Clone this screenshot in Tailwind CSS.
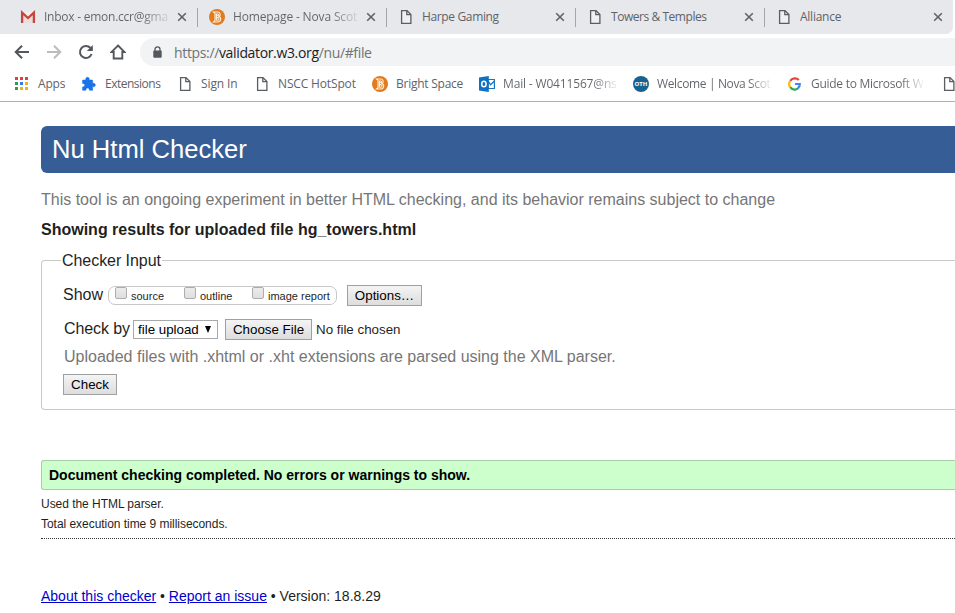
<!DOCTYPE html>
<html lang="en">
<head>
<meta charset="utf-8">
<title>Nu Html Checker</title>
<script src="https://cdn.jsdelivr.net/npm/@tailwindcss/browser@4"></script>
</head>
<body class="w-[955px] h-[613px] overflow-hidden bg-white font-['Liberation_Sans',Arial,sans-serif] text-[#1f1f1f]">
<svg class="hidden">
  <symbol id="doc" viewBox="0 0 16 16"><path d="M3.6 1.6H9L12.9 5.5V14.4H3.6ZM8.8 1.8V5.7H12.7" fill="#fff" fill-opacity=".35" stroke="#5a5d61" stroke-width="1.3"/></symbol>
  <symbol id="close" viewBox="0 0 10 10"><path d="M1.2 1.2L8.8 8.8M8.8 1.2L1.2 8.8" stroke="#5f6368" stroke-width="1.6"/></symbol>
  <symbol id="bs" viewBox="0 0 16 16"><circle cx="8" cy="8" r="8" fill="#e07b20"/><path d="M4.4 3H8.8C11.4 3 12 6.3 10 7.5C12.8 8.6 12 13 8.8 13H4.4L6 11.6V4.4ZM7.4 4.6V11.4M7.4 5H8.8C10 5.2 9.8 6.8 8.6 6.8H7.6M7.6 8.6H9C10.4 8.9 10.2 11.2 8.7 11.2H7.6" fill="none" stroke="#fff3df" stroke-width="1.05"/></symbol>
</svg>
<header class="h-[102px] border-b border-[#b1b1b3] font-['Open_Sans','Noto_Sans',sans-serif] text-[12px] text-[#5f6368]">
  <div class="h-[34px] bg-white">
    <div class="flex h-[34px] w-[953px] rounded-br-[7px] bg-[#e6e8eb] pl-[8px]">
      <div class="relative flex w-[190px] items-center pl-[12px] pr-[11px] after:absolute after:right-0 after:top-[8px] after:h-[19px] after:w-px after:bg-[#a2a5a9]">
        <svg class="size-4 shrink-0" viewBox="0 0 16 16"><path d="M1 3H15V14H1Z" fill="#f4efee"/><path d="M3 5L8 9.6L13 5V14H3Z" fill="#e6dfde"/><path d="M2.1 14V3.6L8 9L13.9 3.6V14" fill="none" stroke="#c8453c" stroke-width="2.3"/></svg>
        <span class="ml-2 whitespace-nowrap tracking-[-0.24px] bg-linear-to-r from-[#5f6368] from-78% to-[#5f6368]/15 bg-clip-text text-transparent">Inbox - emon.ccr@gma</span>
        <svg class="ml-auto size-[10px] shrink-0"><use href="#close"/></svg>
      </div>
      <div class="relative flex w-[189px] items-center pl-[11px] pr-[11px] after:absolute after:right-0 after:top-[8px] after:h-[19px] after:w-px after:bg-[#a2a5a9]">
        <svg class="size-4 shrink-0"><use href="#bs"/></svg>
        <span class="ml-2 whitespace-nowrap tracking-[-0.15px] bg-linear-to-r from-[#5f6368] from-78% to-[#5f6368]/15 bg-clip-text text-transparent">Homepage - Nova Scot</span>
        <svg class="ml-auto size-[10px] shrink-0"><use href="#close"/></svg>
      </div>
      <div class="relative flex w-[189px] items-center pl-[11px] pr-[11px] after:absolute after:right-0 after:top-[8px] after:h-[19px] after:w-px after:bg-[#a2a5a9]">
        <svg class="size-4 shrink-0"><use href="#doc"/></svg>
        <span class="ml-2 whitespace-nowrap tracking-[-0.36px]">Harpe Gaming</span>
        <svg class="ml-auto size-[10px]"><use href="#close"/></svg>
      </div>
      <div class="relative flex w-[189px] items-center pl-[11px] pr-[11px] after:absolute after:right-0 after:top-[8px] after:h-[19px] after:w-px after:bg-[#a2a5a9]">
        <svg class="size-4 shrink-0"><use href="#doc"/></svg>
        <span class="ml-2 whitespace-nowrap tracking-[-0.45px]">Towers &amp; Temples</span>
        <svg class="ml-auto size-[10px]"><use href="#close"/></svg>
      </div>
      <div class="flex w-[188px] items-center pl-[11px] pr-[10px]">
        <svg class="size-4 shrink-0"><use href="#doc"/></svg>
        <span class="ml-2 whitespace-nowrap tracking-[-0.25px]">Alliance</span>
        <svg class="ml-auto size-[10px]"><use href="#close"/></svg>
      </div>
    </div>
  </div>
  <div class="flex h-[36px] items-center pl-[14px]">
    <svg class="size-4" viewBox="0 0 16 16"><path d="M15 8H2M8 1.7L1.7 8L8 14.3" fill="none" stroke="#54575b" stroke-width="2"/></svg>
    <svg class="ml-4 size-4" viewBox="0 0 16 16"><path d="M1 8H14M8 1.7L14.3 8L8 14.3" fill="none" stroke="#babcbe" stroke-width="2"/></svg>
    <svg class="ml-4 size-4" viewBox="0 0 16 16"><path d="M13.6 10A6 6 0 1 1 12.3 3.8L14 5.5" fill="none" stroke="#54575b" stroke-width="2"/><path d="M14.8 1V7H8.8Z" fill="#54575b"/></svg>
    <svg class="ml-4 size-4" viewBox="0 0 16 16"><path d="M8 1.5L14.5 8H12.3V14.5H3.7V8H1.5Z" fill="none" stroke="#54575b" stroke-width="1.9"/></svg>
    <div class="ml-[14px] flex h-[28px] flex-1 items-center rounded-l-full bg-[#f1f3f4] pl-[13px]">
      <svg class="h-[12px] w-[9px]" viewBox="0 0 9 12"><path d="M2 5V3.2a2.5 2.3 0 0 1 5 0V5" fill="none" stroke="#54575b" stroke-width="1.3"/><rect x=".3" y="4.4" width="8.4" height="7.4" rx="1" fill="#54575b"/></svg>
      <span class="ml-[12px] text-[14px] tracking-[-0.35px] text-[#6f7377]">https://<span class="text-[#202124]">validator.w3.org</span>/nu/#file</span>
    </div>
  </div>
  <div class="flex h-[28px] items-center whitespace-nowrap pl-[14px]">
    <div class="flex w-[67px] shrink-0 items-center">
      <svg class="size-4" viewBox="0 0 16 16"><path d="M1 1h3v3H1zM6 1h3v3H6zM11 1h3v3h-3z" fill="#d8453a"/><path d="M1 6h3v3H1zM1 11h3v3H1z" fill="#2f9a50"/><path d="M6 6h3v3H6z" fill="#3b78e7"/><path d="M11 6h3v3h-3z" fill="#f0b21a"/><path d="M6 11h3v3H6zM11 11h3v3h-3z" fill="#f0b21a"/></svg>
      <span class="ml-2 tracking-[-0.2px]">Apps</span>
    </div>
    <div class="flex w-[96px] shrink-0 items-center">
      <svg class="size-4" viewBox="0 0 16 16"><path d="M1.6 4.1H4.9C4.4 2.2 5.3 1.3 6.5 1.3S8.6 2.2 8.1 4.1H11.6V7.3C13.4 6.9 14.3 7.8 14.3 9S13.4 11 11.6 10.6V14.2H8.4C8.4 12.6 7.6 12 6.6 12S4.9 12.6 4.9 14.2H1.6V11C3.2 10.8 3.8 10.1 3.8 9.1S3.2 7.5 1.6 7.4Z" fill="#1a73e8" stroke="#1a73e8" stroke-width=".6" stroke-linejoin="round"/></svg>
      <span class="ml-2 tracking-[-0.5px]">Extensions</span>
    </div>
    <div class="flex w-[77px] shrink-0 items-center"><svg class="size-4"><use href="#doc"/></svg><span class="ml-2 tracking-[-0.1px]">Sign In</span></div>
    <div class="flex w-[118px] shrink-0 items-center"><svg class="size-4"><use href="#doc"/></svg><span class="ml-2 tracking-[-0.15px]">NSCC HotSpot</span></div>
    <div class="flex w-[107px] shrink-0 items-center"><svg class="size-4"><use href="#bs"/></svg><span class="ml-2 tracking-[-0.25px]">Bright Space</span></div>
    <div class="flex w-[154px] shrink-0 items-center">
      <svg class="size-4" viewBox="0 0 16 16"><path d="M9 3.5H15.4V12.5H9Z" fill="#fff" stroke="#1976c5" stroke-width="1.2"/><path d="M9 5L11.6 8.7L15.4 5" fill="none" stroke="#1976c5" stroke-width="1.3"/><path d="M0 1.5L9.8 0V16L0 14.5Z" fill="#0f70c2"/><ellipse cx="4.9" cy="8" rx="2.2" ry="2.8" fill="none" stroke="#fff" stroke-width="1.5"/></svg>
      <span class="ml-2 tracking-[-0.16px] bg-linear-to-r from-[#5f6368] from-80% to-[#5f6368]/10 bg-clip-text text-transparent">Mail - W0411567@ns</span>
    </div>
    <div class="flex w-[154px] shrink-0 items-center">
      <div class="flex size-4 items-center justify-center rounded-full bg-[#17638f] text-[6px] font-bold text-white">OTH</div>
      <span class="ml-2 tracking-[-0.36px] bg-linear-to-r from-[#5f6368] from-80% to-[#5f6368]/10 bg-clip-text text-transparent">Welcome | Nova Scot</span>
    </div>
    <div class="flex w-[154px] shrink-0 items-center">
      <svg class="size-4" viewBox="0 0 16 16"><path d="M3.2 4.8A5.5 5.5 0 0 1 11.8 4" fill="none" stroke="#ea4335" stroke-width="2.2"/><path d="M3.2 4.8A5.5 5.5 0 0 0 3.2 11.2" fill="none" stroke="#fbbc05" stroke-width="2.2"/><path d="M3.2 11.2A5.2 5.2 0 0 0 11.3 12" fill="none" stroke="#34a853" stroke-width="2.2"/><path d="M8 8H12.8A5.2 5.2 0 0 1 11 12.2" fill="none" stroke="#4285f4" stroke-width="2.2"/></svg>
      <span class="ml-2 tracking-[-0.28px] bg-linear-to-r from-[#5f6368] from-80% to-[#5f6368]/10 bg-clip-text text-transparent">Guide to Microsoft W</span>
    </div>
    <svg class="size-4 shrink-0"><use href="#doc"/></svg>
  </div>
</header>
<main class="pl-[41px] pt-[24px]">
  <h1 class="h-[47px] rounded-l-[6px] bg-[#365d96] pl-[11px] text-[25.6px] leading-[46px] text-white">Nu Html Checker</h1>
  <p class="mt-[17px] text-[16px] leading-[20px] text-[#767676]">This tool is an ongoing experiment in better HTML checking, and its behavior remains subject to change</p>
  <h2 class="mt-[10px] text-[16px] font-bold leading-[20px]">Showing results for uploaded file hg_towers.html</h2>
  <fieldset class="mt-[11px] h-[159px] rounded-l-[4px] border border-r-0 border-[#c8c8c8] pl-[21px]">
    <legend class="-ml-[2px] px-px pt-px text-[16px] leading-[18px] tracking-[-0.05px]">Checker Input</legend>
    <div class="mt-[15px] flex h-[21px] items-center">
      <span class="w-[45px] pb-[2px] text-[16px] leading-[20px]">Show</span>
      <div class="flex h-[19px] w-[229px] items-center rounded-[7px] border border-[#c8c8c8] text-[11px]">
        <i class="mb-[5px] ml-[6px] size-[12px] rounded-[2px] border border-[#adadad] bg-linear-to-b from-[#ececec] to-[#dedede]"></i><span class="ml-[4px] w-[53px] pt-[2px]">source</span>
        <i class="mb-[5px] size-[12px] rounded-[2px] border border-[#adadad] bg-linear-to-b from-[#ececec] to-[#dedede]"></i><span class="ml-[4px] w-[52px] pt-[2px]">outline</span>
        <i class="mb-[5px] size-[12px] rounded-[2px] border border-[#adadad] bg-linear-to-b from-[#ececec] to-[#dedede]"></i><span class="ml-[4px] whitespace-nowrap pt-[2px]">image report</span>
      </div>
      <button class="ml-[10px] h-[21px] w-[75px] border border-[#a0a0a0] bg-linear-to-b from-[#f4f4f4] to-[#dddddd] text-[13.33px] leading-[18px] text-black">Options…</button>
    </div>
    <div class="mt-[13px] flex h-[21px] items-center">
      <span class="w-[70px] whitespace-nowrap pb-[2px] pl-px text-[16px] leading-[20px] tracking-[-0.1px]">Check by</span>
      <div class="flex h-[19px] w-[85px] items-center border border-[#a9a9a9] pl-[4px] text-[13.33px] text-black">file upload<svg class="ml-[6px] h-[7px] w-[6px]" viewBox="0 0 6 7"><path d="M0 0H6L3 7Z"/></svg></div>
      <button class="ml-[7px] h-[21px] w-[87px] border border-[#a0a0a0] bg-linear-to-b from-[#f4f4f4] to-[#dddddd] text-[13.33px] leading-[18px] text-black">Choose File</button>
      <span class="ml-[4px] text-[13.33px]">No file chosen</span>
    </div>
    <p class="mt-[7px] pl-px text-[16px] leading-[20px] text-[#767676]">Uploaded files with .xhtml or .xht extensions are parsed using the XML parser.</p>
    <button class="mt-[7px] block h-[21px] w-[54px] border border-[#a0a0a0] bg-linear-to-b from-[#f4f4f4] to-[#dddddd] text-[13.33px] leading-[18px] text-black">Check</button>
  </fieldset>
  <p class="mt-[50px] h-[30px] rounded-l-[3px] border border-r-0 border-[#aaccaa] bg-[#ccffcc] pl-[7px] text-[14px] font-bold leading-[28px] text-black">Document checking completed. No errors or warnings to show.</p>
  <p class="mt-[4px] text-[12px] leading-[20px] tracking-[-0.04px]">Used the HTML parser.</p>
  <p class="text-[12px] leading-[20px] tracking-[-0.04px]">Total execution time 9 milliseconds.</p>
  <div class="mt-[4px] border-t border-dotted border-[#333]"></div>
  <footer class="mt-[47px] text-[14px] leading-[20px]"><a class="text-[#0000cc] underline">About this checker</a> • <a class="text-[#0000cc] underline">Report an issue</a> • Version: 18.8.29</footer>
</main>
</body>
</html>
